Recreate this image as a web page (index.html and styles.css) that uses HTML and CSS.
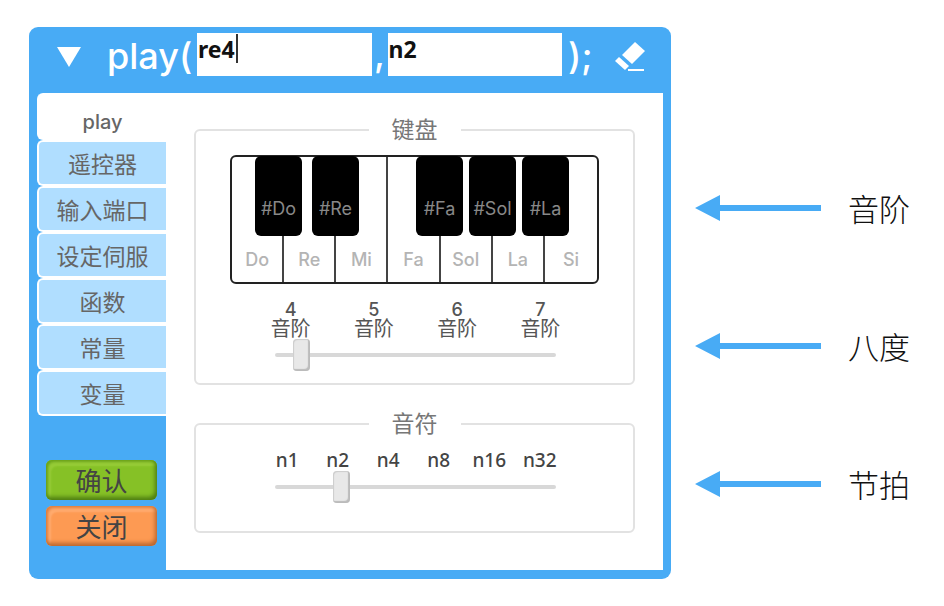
FILE: index.html
```html
<!DOCTYPE html>
<html lang="zh-CN">
<head>
<meta charset="utf-8">
<title>play</title>
<link rel="stylesheet" href="styles.css">
</head>
<body>
<main class="page">
  <form class="dialog">
    <header class="bar">
      <button type="button" class="icon-button" aria-label="展开">
        <svg width="24" height="20" viewBox="0 0 24 20"><path d="M0 0H24L12 20Z" fill="#fff"/></svg>
      </button>
      <span class="call-open">play(</span>
      <span class="field">
        <input class="arg" type="text" value="re4" aria-label="音阶">
        <span class="caret"></span>
      </span>
      <span class="comma">,</span>
      <span class="field">
        <input class="arg" type="text" value="n2" aria-label="音符">
      </span>
      <span class="call-close">);</span>
      <button type="button" class="icon-button" aria-label="清除">
        <svg width="30" height="32" viewBox="0 0 30 32" fill="#fff"><path d="M20 1L30 10L17 23L7 14Z"/><path d="M0 20L4 16L14 25L10 29Z"/><path d="M13 28H29V30H13Z"/></svg>
      </button>
    </header>
    <div class="body">
      <div class="side">
        <nav class="tabs">
          <button type="button" class="tab active">play</button>
          <button type="button" class="tab">遥控器</button>
          <button type="button" class="tab">输入端口</button>
          <button type="button" class="tab">设定伺服</button>
          <button type="button" class="tab">函数</button>
          <button type="button" class="tab">常量</button>
          <button type="button" class="tab">变量</button>
        </nav>
        <div class="actions">
          <button type="button" class="action confirm">确认</button>
          <button type="button" class="action close">关闭</button>
        </div>
      </div>
      <div class="panel">
        <fieldset class="group">
          <legend>键盘</legend>
          <div class="piano">
            <div class="whites">
              <button type="button" class="white">Do</button>
              <button type="button" class="white">Re</button>
              <button type="button" class="white">Mi</button>
              <button type="button" class="white">Fa</button>
              <button type="button" class="white">Sol</button>
              <button type="button" class="white">La</button>
              <button type="button" class="white">Si</button>
            </div>
            <div class="blacks">
              <div class="pair">
                <button type="button" class="black">#Do</button>
                <button type="button" class="black">#Re</button>
              </div>
              <div class="trio">
                <button type="button" class="black">#Fa</button>
                <button type="button" class="black">#Sol</button>
                <button type="button" class="black">#La</button>
              </div>
            </div>
          </div>
          <div class="octaves">
            <div><div class="digit">4</div><div>音阶</div></div>
            <div><div class="digit">5</div><div>音阶</div></div>
            <div><div class="digit">6</div><div>音阶</div></div>
            <div><div class="digit">7</div><div>音阶</div></div>
          </div>
          <input class="slider" type="range" min="0" max="100" value="7" aria-label="八度">
        </fieldset>
        <fieldset class="group beats-group">
          <legend>音符</legend>
          <div class="beats">
            <span>n1</span>
            <span>n2</span>
            <span>n4</span>
            <span>n8</span>
            <span>n16</span>
            <span>n32</span>
          </div>
          <input class="slider" type="range" min="0" max="100" value="22" aria-label="节拍">
        </fieldset>
      </div>
    </div>
  </form>
  <aside class="notes">
    <div class="note">
      <svg width="126" height="26" viewBox="0 0 126 26"><path d="M0 13L25 0V10H126V16H25V26Z" fill="#48abf5"/></svg>
      <span>音阶</span>
    </div>
    <div class="note">
      <svg width="126" height="26" viewBox="0 0 126 26"><path d="M0 13L25 0V10H126V16H25V26Z" fill="#48abf5"/></svg>
      <span>八度</span>
    </div>
    <div class="note">
      <svg width="126" height="26" viewBox="0 0 126 26"><path d="M0 13L25 0V10H126V16H25V26Z" fill="#48abf5"/></svg>
      <span>节拍</span>
    </div>
  </aside>
</main>
</body>
</html>
```
FILE: styles.css
```css
* {
  box-sizing: border-box;
}

body {
  margin: 0;
  background: #fff;
  font-family: Inter, "Noto Sans CJK SC", sans-serif;
}

button {
  padding: 0;
  border: 0;
  font-family: inherit;
}

.page {
  display: flex;
  padding: 27px 34px 27px 29px;
}

.dialog {
  flex: 1;
  min-width: 0;
  padding: 0 8px 9px;
  background: #48abf5;
  border-radius: 9px;
}

/* Header */
.bar {
  display: flex;
  align-items: flex-start;
  padding: 6px 18px 12px 20px;
  color: #fff;
  font-size: 36px;
  font-weight: 500;
  line-height: 43px;
}

.icon-button {
  display: flex;
  align-items: center;
  height: 48px;
  background: none;
}

.call-open {
  width: 90px;
  margin-left: 26px;
  padding-top: 2px;
}

.field {
  position: relative;
  display: flex;
  flex: 1;
  min-width: 0;
}

.arg {
  width: 100%;
  height: 43px;
  padding: 0 1px 11px;
  border: 0;
  border-radius: 0;
  background: #fff;
  color: #111;
  font: bold 23px "Noto Sans", sans-serif;
}

.caret {
  position: absolute;
  top: 1px;
  left: 39px;
  width: 2px;
  height: 29px;
  background: #333;
}

.comma {
  width: 16px;
  text-align: center;
}

.call-close {
  width: 53px;
  padding: 2px 0 0 6px;
}

/* Sidebar */
.body {
  display: flex;
}

.side {
  flex: 0 0 129px;
  display: flex;
  flex-direction: column;
}

.tabs {
  display: flex;
  flex-direction: column;
}

.tab {
  height: 46px;
  padding-top: 4px;
  border: 2px solid #fff;
  border-right: 0;
  border-radius: 6px 0 0 6px;
  background: #b0deff;
  color: #666;
  font-size: 23px;
  line-height: 38px;
}

.tab.active {
  height: 47px;
  padding-top: 8px;
  background: #fff;
  font-size: 20px;
  font-weight: 500;
}

.actions {
  display: flex;
  flex-direction: column;
  gap: 6px;
  padding: 44px 9px 0;
}

.action {
  height: 40px;
  padding-top: 4px;
  border-radius: 6px;
  color: #444;
  font-size: 26px;
  line-height: 36px;
}

.confirm {
  background: #86c126;
  box-shadow: inset -2px -3px 4px #4d7d12, inset 2px 2px 3px #6ca51c, inset 5px 6px 2px #98cd38;
}

.close {
  background: #fd9a53;
  box-shadow: inset -2px -3px 4px #b9672f, inset 2px 2px 3px #e08040, inset 5px 6px 2px #ffac70;
}

/* Panel */
.panel {
  flex: 1;
  min-width: 0;
  padding: 20px 28px 37px;
  background: #fff;
}

.group {
  min-width: 0;
  margin: 0;
  padding: 8px 34px 12px;
  border: 2px solid #e2e2e2;
  border-radius: 6px;
}

.group legend {
  margin: 0 auto;
  padding: 0 23px;
  color: #777;
  font-size: 23px;
  line-height: 34px;
}

.beats-group {
  margin-top: 22px;
  padding: 8px 34px 28px;
}

/* Keyboard */
.piano {
  position: relative;
}

.whites {
  display: flex;
  height: 129px;
  border: 2px solid #222;
  border-radius: 6px;
}

.white {
  flex: 52 1 0;
  padding-top: 80px;
  border-right: 2px solid #444;
  background: none;
  color: #b4b4b4;
  font-size: 18px;
  font-weight: 500;
}

.white:last-child {
  flex-grow: 54;
  border-right: 0;
}

.blacks {
  position: absolute;
  top: 1px;
  left: 25px;
  right: 30px;
  display: flex;
  justify-content: space-between;
}

.pair,
.trio {
  display: flex;
  gap: 10px;
}

.trio {
  gap: 6px;
}

.black {
  width: 47px;
  height: 80px;
  padding-top: 25px;
  border-radius: 6px;
  background: #000;
  color: #888;
  font-size: 18px;
  white-space: nowrap;
}

/* Scales */
.octaves {
  display: grid;
  grid-template-columns: repeat(4, 1fr);
  padding: 16px 17px 0 19px;
  color: #555;
  font-size: 20px;
  line-height: 20px;
  text-align: center;
}

.digit {
  font-size: 18px;
  font-weight: 500;
  line-height: 19px;
}

.beats {
  display: grid;
  grid-template-columns: repeat(6, 1fr);
  padding: 0 34px;
  margin-left: -2px;
  color: #444;
  font-family: "Noto Sans", sans-serif;
  font-size: 19px;
  font-weight: 500;
  line-height: 22px;
  text-align: center;
}

.slider {
  display: block;
  width: calc(100% - 88px);
  height: 32px;
  margin: 0 43px 0 45px;
  background: none;
  appearance: none;
}

.slider::-webkit-slider-runnable-track {
  height: 4px;
  border-radius: 2px;
  background: #d8d8d8;
}

.slider::-webkit-slider-thumb {
  width: 17px;
  height: 32px;
  margin-top: -14px;
  border-radius: 4px;
  background: #e8e8e8;
  box-shadow: inset -2px -2px 1px #bbb, inset 1px 1px 1px #ccc;
  appearance: none;
}

/* Annotations */
.notes {
  display: flex;
  flex-direction: column;
  gap: 92px;
  padding: 158px 0 0 24px;
}

.note {
  display: flex;
  align-items: center;
  gap: 27px;
  height: 46px;
  color: #111;
  font-family: "Noto Sans CJK SC", sans-serif;
  font-size: 31px;
  font-weight: 300;
  line-height: 46px;
}
```
